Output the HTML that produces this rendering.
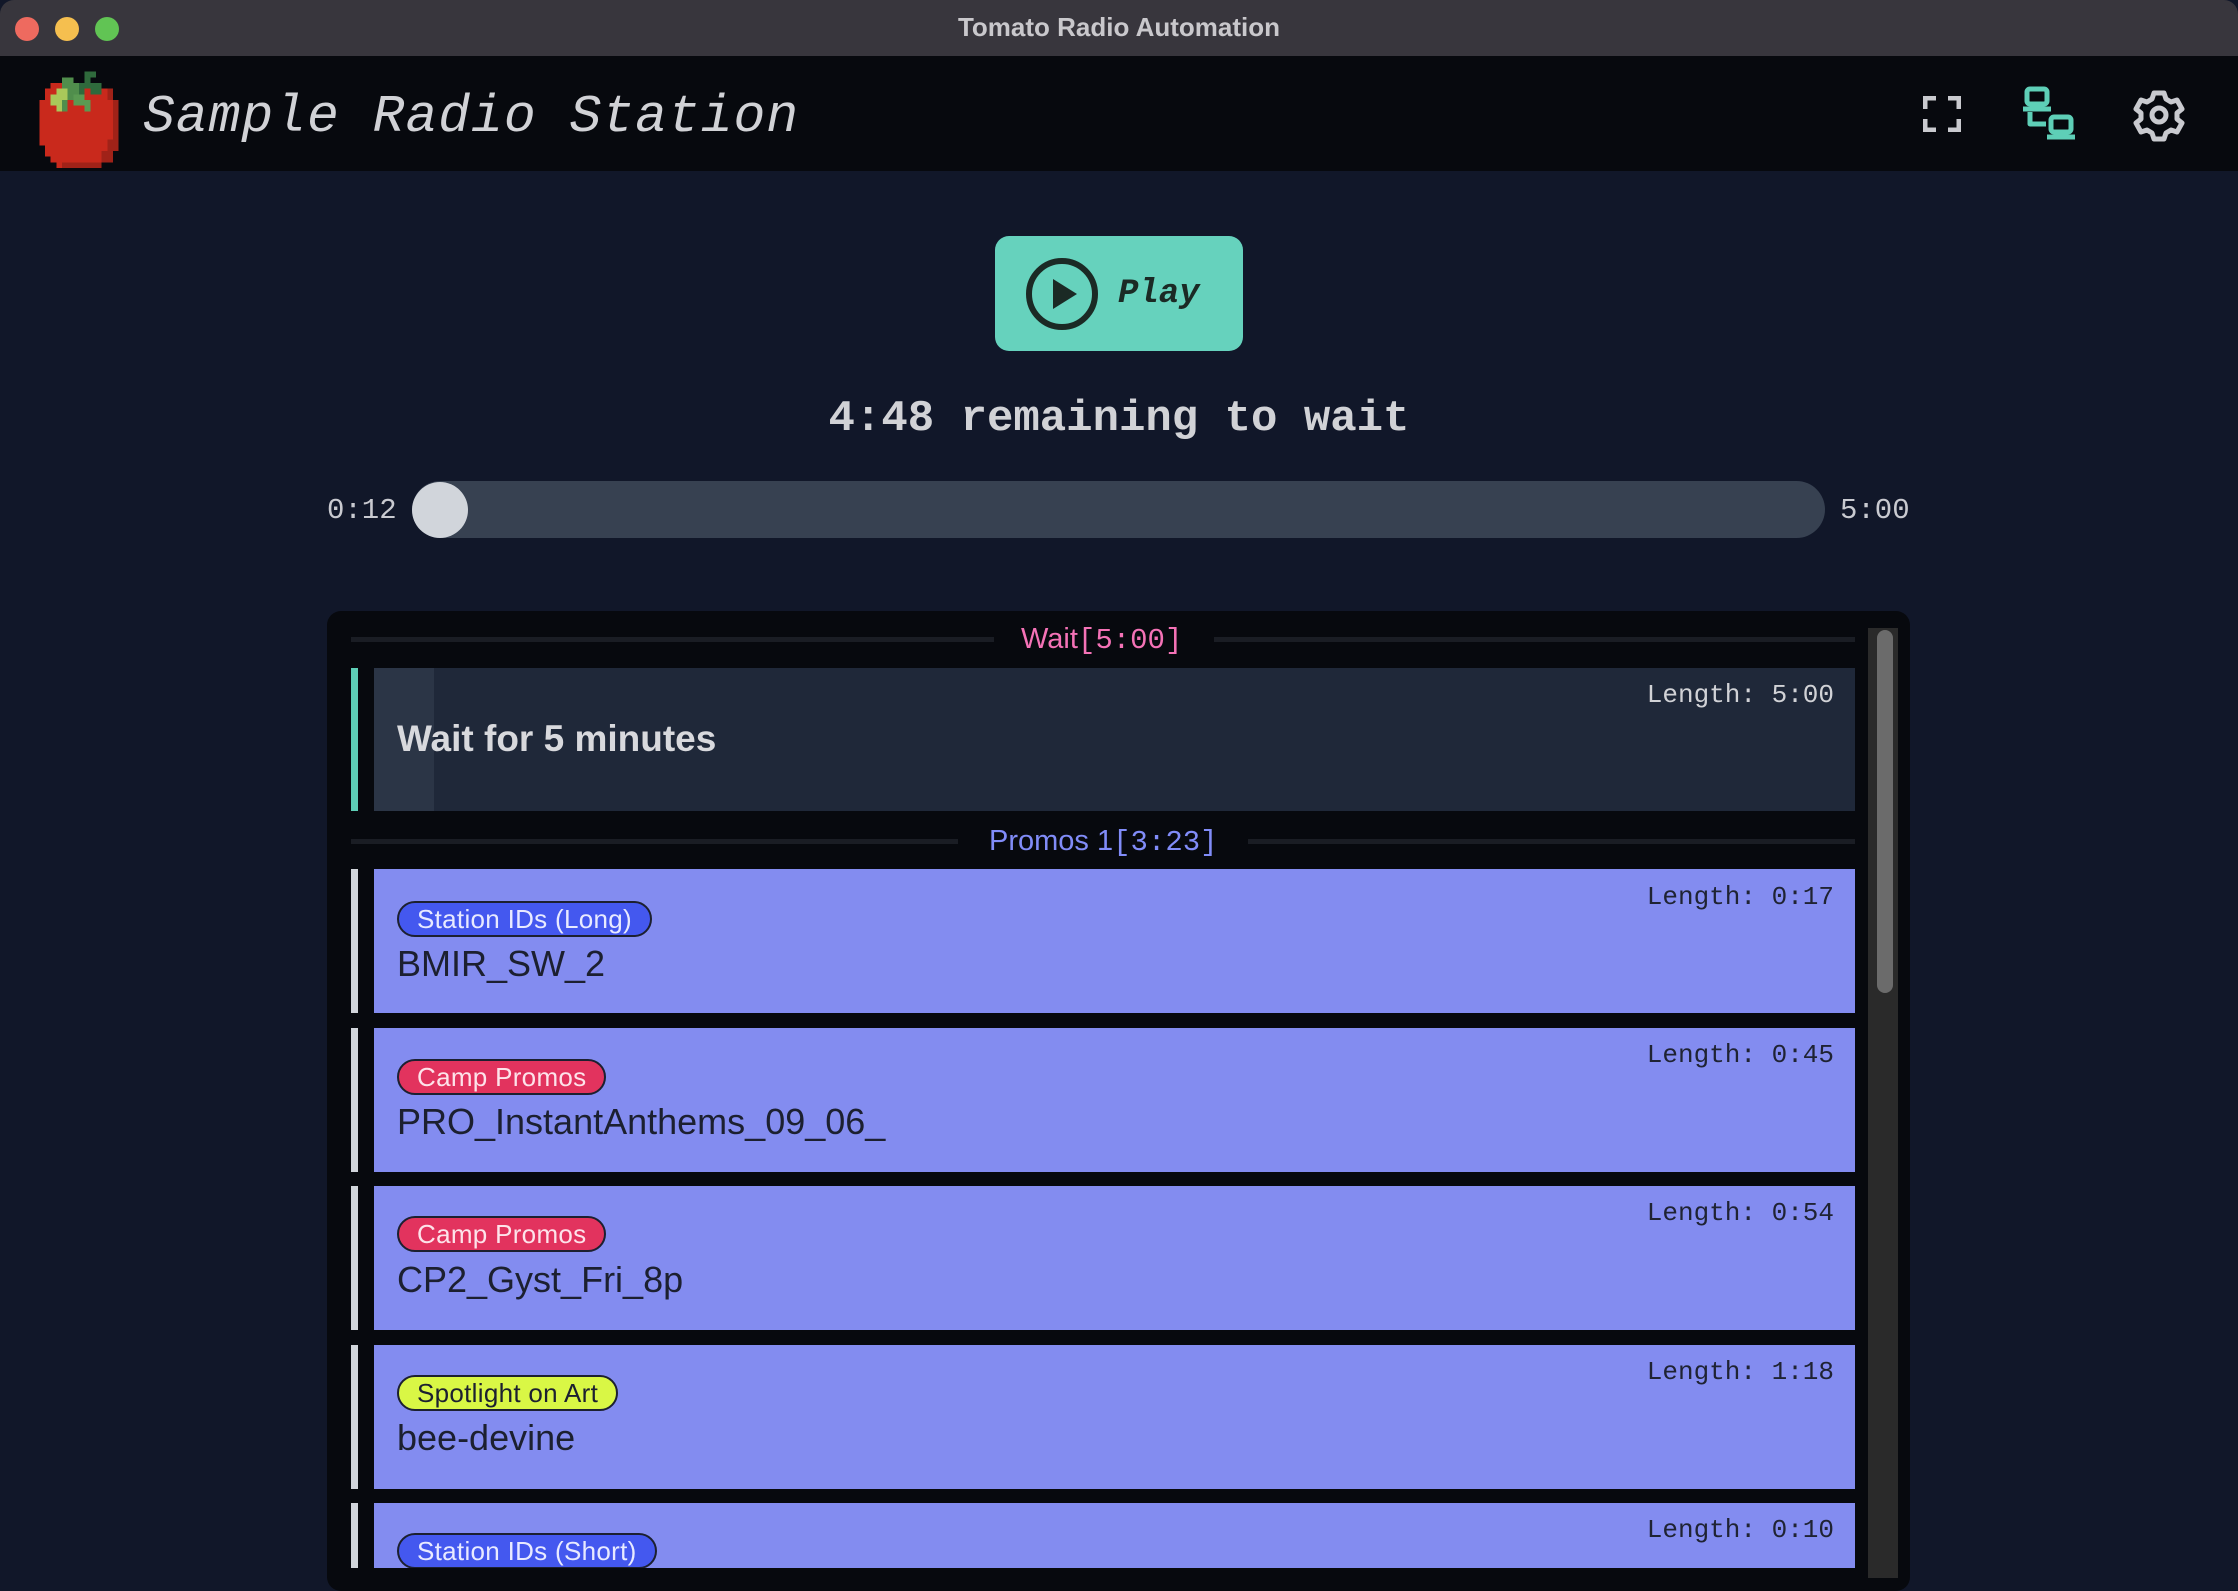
<!DOCTYPE html>
<html><head><meta charset="utf-8"><style>
*{margin:0;padding:0;box-sizing:border-box}
body{width:2238px;height:1578px;overflow:hidden;background:#111729;font-family:"Liberation Sans",sans-serif;position:relative}
.abs{position:absolute}
.mono{font-family:"Liberation Mono",monospace}
.titlebar{left:0;top:0;width:2238px;height:56px;background:#38363d;border-radius:14px 14px 0 0}
.dot{top:17px;width:24px;height:24px;border-radius:50%}
.header{left:0;top:56px;width:2238px;height:115px;background:#07090e}
.panel{left:327px;top:611px;width:1583px;height:980px;background:#07090e;border-radius:14px}
.gline{height:5px;background:#1a1d24}
.item{left:374px;width:1481px;height:144px;background:#838cf0}
.bar{left:351px;width:7px;height:144px;background:#d1d5db}
.len{right:0;font-size:26px;color:#1f2333}
.tag{left:397px;height:36px;border-radius:18px;border:2px solid #1c2030;font-size:26px;line-height:32px;padding:0 18px;font-weight:500;letter-spacing:0.3px}
.name{left:397px;font-size:36px;color:#1c2030}
</style></head><body>
<div class="abs titlebar"></div>
<div class="abs dot" style="left:15px;background:#ee6a5f"></div>
<div class="abs dot" style="left:55px;background:#f5bf4f"></div>
<div class="abs dot" style="left:95px;background:#61c454"></div>
<div class="abs" style="left:0;width:2238px;top:12px;text-align:center;color:#c9c8cc;font-weight:bold;font-size:26px">Tomato Radio Automation</div>
<div class="abs header"></div>
<svg class="abs" style="left:28px;top:66px" width="102" height="102" viewBox="0 0 18 18" shape-rendering="crispEdges">
<path fill="#c9291c" d="M4 3h9v1h2v2h1v9h-1v2h-2v1H5v-1H4v-1H3v-2H2V6h1V4h1z"/>
<path fill="#a02218" d="M14 4h1v2h1v9h-1v2h-2v1H6v-1h7v-2h1v-2h1V6h-1z"/>
<path fill="#508e4c" d="M6 2h2v1h2V2h1v2h-1v1H8v1H7v2H6V3z"/>
<path fill="#2f6a3c" d="M10 1h2v1h-1v1h2v2h-2V4h-1v1H9V3h1z"/>
<path fill="#a9c85a" d="M5 4h2v2H6v2H5V7H4V5h1z"/>
<path fill="#5a9a52" d="M8 5h2v1h1v2h-1V7H8z"/>
</svg>
<div class="abs mono" style="left:143px;top:87px;font-size:53px;font-style:italic;color:#d1d2d6;letter-spacing:1px">Sample Radio Station</div>
<svg class="abs" style="left:1923px;top:96px" width="38" height="36" viewBox="0 0 38 36" fill="none" stroke="#c9cacf" stroke-width="5"><path d="M2 13V2h11M25 2h11v11M36 23v11H25M13 34H2V23"/></svg>
<svg class="abs" style="left:2022px;top:86px" width="60" height="56" viewBox="0 0 60 56" fill="none" stroke="#5ecfb7" stroke-width="5" stroke-linejoin="round"><rect x="5" y="3" width="20" height="15" rx="3"/><path d="M1 23h28"/><rect x="29" y="31" width="20" height="15" rx="3"/><path d="M25 51h28"/><path d="M8 26v12h16"/></svg>
<svg class="abs" style="left:2132px;top:88px" width="54" height="54" viewBox="-27 -27 54 54"><path fill="none" stroke="#c9cacf" stroke-width="5" stroke-linejoin="round" d="M-5-22h10l2 6 5 3 6-2 5 9-5 4v6l5 4-5 9-6-2-5 3-2 6h-10l-2-6-5-3-6 2-5-9 5-4v-6l-5-4 5-9 6 2 5-3z"/><circle r="7" fill="none" stroke="#c9cacf" stroke-width="5"/></svg>

<div class="abs" style="left:995px;top:236px;width:248px;height:115px;background:#66d2bd;border-radius:14px"></div>
<svg class="abs" style="left:1024px;top:256px" width="76" height="76" viewBox="0 0 76 76"><circle cx="38" cy="38" r="33" fill="none" stroke="#1b2a25" stroke-width="6"/><path d="M29 23v30l24-15z" fill="#1b2a25"/></svg>
<div class="abs mono" style="left:1118px;top:275px;font-size:34px;font-weight:bold;font-style:italic;color:#1b2a25">Play</div>

<div class="abs mono" style="left:0;width:2238px;text-align:center;top:394px;font-size:44px;font-weight:bold;color:#d1d2d6">4:48 remaining to wait</div>
<div class="abs mono" style="left:327px;top:494px;font-size:29px;color:#c9cad0">0:12</div>
<div class="abs mono" style="left:1840px;top:494px;font-size:29px;color:#c9cad0">5:00</div>
<div class="abs" style="left:412px;top:481px;width:1413px;height:57px;background:#374151;border-radius:29px"></div>
<div class="abs" style="left:412px;top:482px;width:56px;height:56px;background:#d1d5db;border-radius:50%"></div>

<div class="abs panel"></div>
<div class="abs" style="left:1868px;top:628px;width:30px;height:950px;background:#2a2a2a"></div>
<div class="abs" style="left:1877px;top:630px;width:16px;height:363px;background:#6b6b6b;border-radius:8px"></div>

<div class="abs gline" style="left:351px;top:637px;width:643px"></div>
<div class="abs gline" style="left:1214px;top:637px;width:641px"></div>
<div class="abs" style="left:1021px;top:623px;font-size:29px;color:#f472b6">Wait<span class="mono">[5:00]</span></div>

<div class="abs" style="left:351px;top:668px;width:7px;height:143px;background:#5ecfb7"></div>
<div class="abs" style="left:374px;top:668px;width:1481px;height:143px;background:#1f2839"></div>
<div class="abs" style="left:374px;top:668px;width:60px;height:143px;background:#2b3546"></div>
<div class="abs mono" style="left:1450px;width:384px;text-align:right;top:680px;font-size:26px;color:#d1d2d6">Length: 5:00</div>
<div class="abs" style="left:397px;top:718px;font-size:37px;font-weight:bold;color:#d8d9dd">Wait for 5 minutes</div>

<div class="abs gline" style="left:351px;top:839px;width:607px"></div>
<div class="abs gline" style="left:1248px;top:839px;width:607px"></div>
<div class="abs" style="left:989px;top:825px;font-size:29px;color:#818cf8">Promos 1<span class="mono">[3:23]</span></div>

<div class="abs bar" style="top:869px"></div><div class="abs item" style="top:869px"></div>
<div class="abs mono len" style="left:1450px;width:384px;text-align:right;top:882px">Length: 0:17</div>
<div class="abs tag" style="top:901px;background:#4458ef;color:#e8eaff">Station IDs (Long)</div>
<div class="abs name" style="top:943px">BMIR_SW_2</div>

<div class="abs bar" style="top:1028px"></div><div class="abs item" style="top:1028px"></div>
<div class="abs mono len" style="left:1450px;width:384px;text-align:right;top:1040px">Length: 0:45</div>
<div class="abs tag" style="top:1059px;background:#e2335e;color:#fde3ea">Camp Promos</div>
<div class="abs name" style="top:1101px">PRO_InstantAnthems_09_06_</div>

<div class="abs bar" style="top:1186px"></div><div class="abs item" style="top:1186px"></div>
<div class="abs mono len" style="left:1450px;width:384px;text-align:right;top:1198px">Length: 0:54</div>
<div class="abs tag" style="top:1216px;background:#e2335e;color:#fde3ea">Camp Promos</div>
<div class="abs name" style="top:1259px">CP2_Gyst_Fri_8p</div>

<div class="abs bar" style="top:1345px"></div><div class="abs item" style="top:1345px"></div>
<div class="abs mono len" style="left:1450px;width:384px;text-align:right;top:1357px">Length: 1:18</div>
<div class="abs tag" style="top:1375px;background:#d9f745;color:#1c2030">Spotlight on Art</div>
<div class="abs name" style="top:1417px">bee-devine</div>

<div class="abs bar" style="top:1503px;height:65px"></div><div class="abs item" style="top:1503px;height:65px"></div>
<div class="abs mono len" style="left:1450px;width:384px;text-align:right;top:1515px">Length: 0:10</div>
<div class="abs tag" style="top:1533px;background:#4458ef;color:#e8eaff">Station IDs (Short)</div>
<div class="abs" style="left:327px;top:1568px;width:1541px;height:10px;background:#07090e"></div>
</body></html>
